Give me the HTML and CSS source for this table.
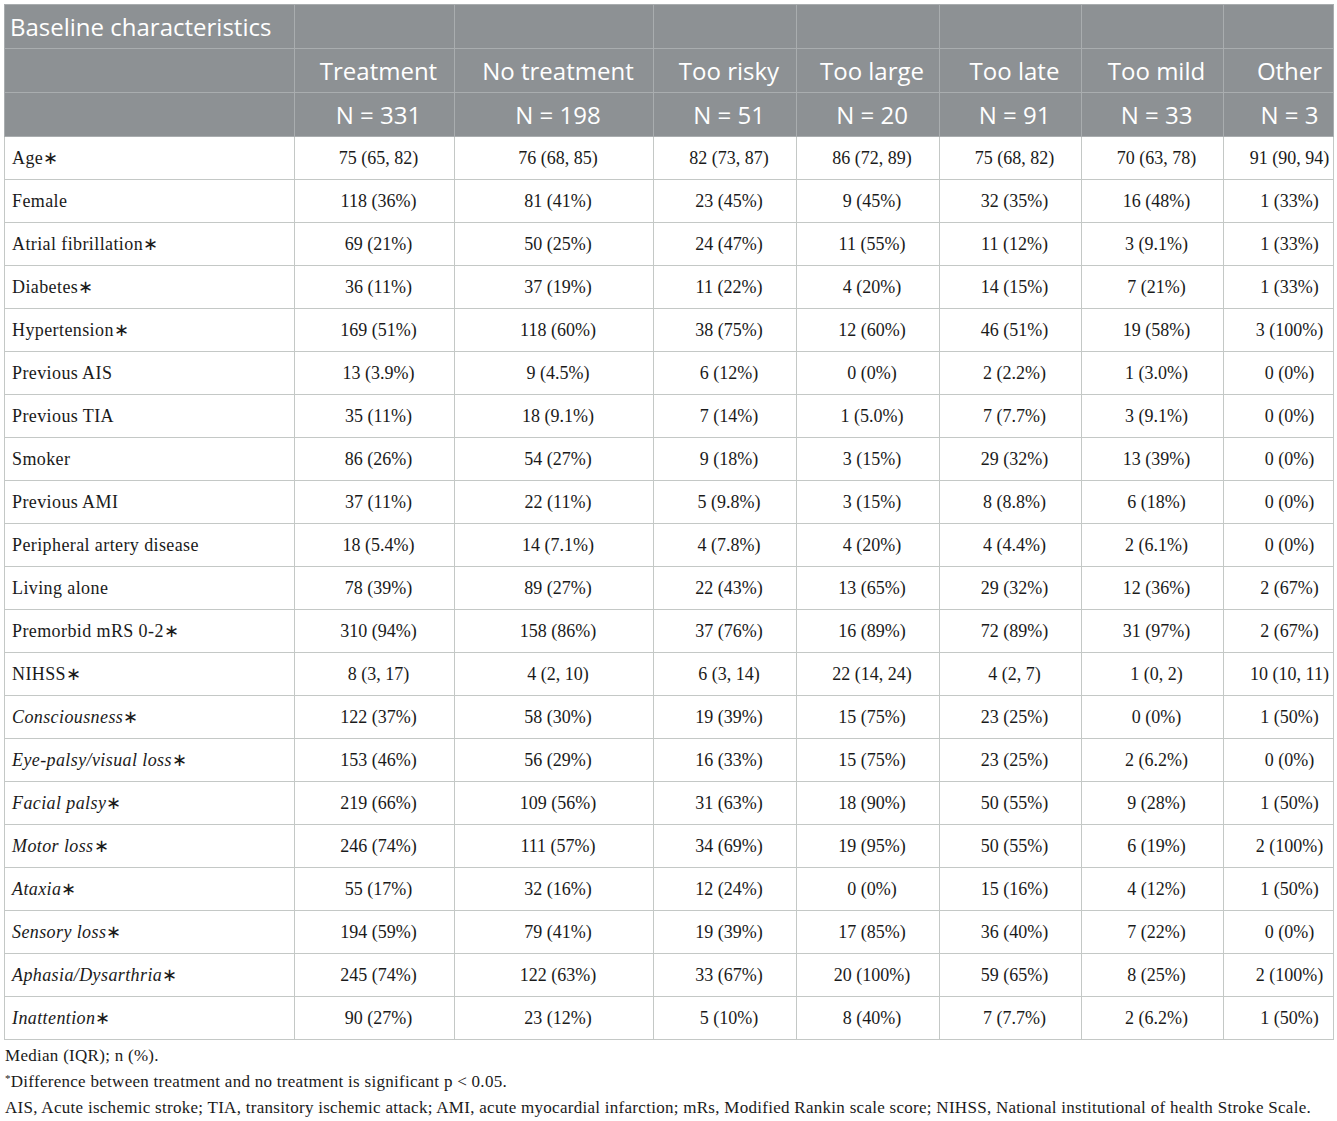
FILE: index.html
```html
<!DOCTYPE html>
<html>
<head>
<meta charset="utf-8">
<link rel="stylesheet" href="styles.css">
</head>
<body>
<table class="tbl">
<colgroup>
<col class="c0"><col class="c1"><col class="c2"><col class="c3"><col class="c4"><col class="c5"><col class="c6"><col class="c7">
</colgroup>
<thead>
<tr><th class="lab">Baseline characteristics</th><th></th><th></th><th></th><th></th><th></th><th></th><th class="last"></th></tr>
<tr><th></th><th>Treatment</th><th>No treatment</th><th>Too risky</th><th>Too large</th><th>Too late</th><th>Too mild</th><th class="last">Other</th></tr>
<tr><th></th><th>N = 331</th><th>N = 198</th><th>N = 51</th><th>N = 20</th><th>N = 91</th><th>N = 33</th><th class="last">N = 3</th></tr>
</thead>
<tbody>
<tr><td>Age∗</td><td>75 (65, 82)</td><td>76 (68, 85)</td><td>82 (73, 87)</td><td>86 (72, 89)</td><td>75 (68, 82)</td><td>70 (63, 78)</td><td class="last">91 (90, 94)</td></tr>
<tr><td>Female</td><td>118 (36%)</td><td>81 (41%)</td><td>23 (45%)</td><td>9 (45%)</td><td>32 (35%)</td><td>16 (48%)</td><td class="last">1 (33%)</td></tr>
<tr><td>Atrial fibrillation∗</td><td>69 (21%)</td><td>50 (25%)</td><td>24 (47%)</td><td>11 (55%)</td><td>11 (12%)</td><td>3 (9.1%)</td><td class="last">1 (33%)</td></tr>
<tr><td>Diabetes∗</td><td>36 (11%)</td><td>37 (19%)</td><td>11 (22%)</td><td>4 (20%)</td><td>14 (15%)</td><td>7 (21%)</td><td class="last">1 (33%)</td></tr>
<tr><td>Hypertension∗</td><td>169 (51%)</td><td>118 (60%)</td><td>38 (75%)</td><td>12 (60%)</td><td>46 (51%)</td><td>19 (58%)</td><td class="last">3 (100%)</td></tr>
<tr><td>Previous AIS</td><td>13 (3.9%)</td><td>9 (4.5%)</td><td>6 (12%)</td><td>0 (0%)</td><td>2 (2.2%)</td><td>1 (3.0%)</td><td class="last">0 (0%)</td></tr>
<tr><td>Previous TIA</td><td>35 (11%)</td><td>18 (9.1%)</td><td>7 (14%)</td><td>1 (5.0%)</td><td>7 (7.7%)</td><td>3 (9.1%)</td><td class="last">0 (0%)</td></tr>
<tr><td>Smoker</td><td>86 (26%)</td><td>54 (27%)</td><td>9 (18%)</td><td>3 (15%)</td><td>29 (32%)</td><td>13 (39%)</td><td class="last">0 (0%)</td></tr>
<tr><td>Previous AMI</td><td>37 (11%)</td><td>22 (11%)</td><td>5 (9.8%)</td><td>3 (15%)</td><td>8 (8.8%)</td><td>6 (18%)</td><td class="last">0 (0%)</td></tr>
<tr><td>Peripheral artery disease</td><td>18 (5.4%)</td><td>14 (7.1%)</td><td>4 (7.8%)</td><td>4 (20%)</td><td>4 (4.4%)</td><td>2 (6.1%)</td><td class="last">0 (0%)</td></tr>
<tr><td>Living alone</td><td>78 (39%)</td><td>89 (27%)</td><td>22 (43%)</td><td>13 (65%)</td><td>29 (32%)</td><td>12 (36%)</td><td class="last">2 (67%)</td></tr>
<tr><td>Premorbid mRS 0-2∗</td><td>310 (94%)</td><td>158 (86%)</td><td>37 (76%)</td><td>16 (89%)</td><td>72 (89%)</td><td>31 (97%)</td><td class="last">2 (67%)</td></tr>
<tr><td>NIHSS∗</td><td>8 (3, 17)</td><td>4 (2, 10)</td><td>6 (3, 14)</td><td>22 (14, 24)</td><td>4 (2, 7)</td><td>1 (0, 2)</td><td class="last">10 (10, 11)</td></tr>
<tr><td><i>Consciousness</i>∗</td><td>122 (37%)</td><td>58 (30%)</td><td>19 (39%)</td><td>15 (75%)</td><td>23 (25%)</td><td>0 (0%)</td><td class="last">1 (50%)</td></tr>
<tr><td><i>Eye-palsy/visual loss</i>∗</td><td>153 (46%)</td><td>56 (29%)</td><td>16 (33%)</td><td>15 (75%)</td><td>23 (25%)</td><td>2 (6.2%)</td><td class="last">0 (0%)</td></tr>
<tr><td><i>Facial palsy</i>∗</td><td>219 (66%)</td><td>109 (56%)</td><td>31 (63%)</td><td>18 (90%)</td><td>50 (55%)</td><td>9 (28%)</td><td class="last">1 (50%)</td></tr>
<tr><td><i>Motor loss</i>∗</td><td>246 (74%)</td><td>111 (57%)</td><td>34 (69%)</td><td>19 (95%)</td><td>50 (55%)</td><td>6 (19%)</td><td class="last">2 (100%)</td></tr>
<tr><td><i>Ataxia</i>∗</td><td>55 (17%)</td><td>32 (16%)</td><td>12 (24%)</td><td>0 (0%)</td><td>15 (16%)</td><td>4 (12%)</td><td class="last">1 (50%)</td></tr>
<tr><td><i>Sensory loss</i>∗</td><td>194 (59%)</td><td>79 (41%)</td><td>19 (39%)</td><td>17 (85%)</td><td>36 (40%)</td><td>7 (22%)</td><td class="last">0 (0%)</td></tr>
<tr><td><i>Aphasia/Dysarthria</i>∗</td><td>245 (74%)</td><td>122 (63%)</td><td>33 (67%)</td><td>20 (100%)</td><td>59 (65%)</td><td>8 (25%)</td><td class="last">2 (100%)</td></tr>
<tr><td><i>Inattention</i>∗</td><td>90 (27%)</td><td>23 (12%)</td><td>5 (10%)</td><td>8 (40%)</td><td>7 (7.7%)</td><td>2 (6.2%)</td><td class="last">1 (50%)</td></tr>
</tbody>
</table>
<div class="notes">
<p>Median (IQR); n (%).</p>
<p><sup>*</sup>Difference between treatment and no treatment is significant p &lt; 0.05.</p>
<p>AIS, Acute ischemic stroke; TIA, transitory ischemic attack; AMI, acute myocardial infarction; mRs, Modified Rankin scale score; NIHSS, National institutional of health Stroke Scale.</p>
</div>
</body>
</html>
```
FILE: styles.css
```css
html, body { margin: 0; padding: 0; background: #fff; }
body { padding: 4px 0 0 4px; font-family: "Liberation Serif", "Times New Roman", serif; color: #1a1a1a; }
.tbl { border-collapse: collapse; table-layout: fixed; width: 1329px; border: 1px solid #b9c0bd; }
.c0 { width: 290px; } .c1 { width: 160px; } .c2 { width: 199px; } .c3 { width: 143px; }
.c4 { width: 143px; } .c5 { width: 142px; } .c6 { width: 142px; } .c7 { width: 110px; }
.tbl th { background: #8d9194; color: #fff; font-family: "Open Sans", "Noto Sans", sans-serif; font-weight: 400; font-size: 24px; height: 43px; padding: 0 0 0 8px; border: 1px solid #a9adaf; text-align: center; white-space: nowrap; overflow: hidden; }
.tbl th.lab { text-align: left; padding-left: 5px; font-size: 24px; overflow: visible; }
.tbl th.last, .tbl td.last { padding-left: 22px; }
.tbl td { font-size: 18px; height: 42px; padding: 0 0 0 8px; border: 1px solid #c4c8c6; text-align: center; white-space: nowrap; overflow: hidden; }
.tbl td:first-child { text-align: left; padding-left: 7px; letter-spacing: 0.4px; }
.notes { padding-left: 1px; font-size: 17px; letter-spacing: 0.28px; }
.notes p { margin: 0; line-height: 26px; }
.notes p:first-child { margin-top: 3px; }
.notes sup { font-size: 11px; vertical-align: 5px; line-height: 0; }
```
